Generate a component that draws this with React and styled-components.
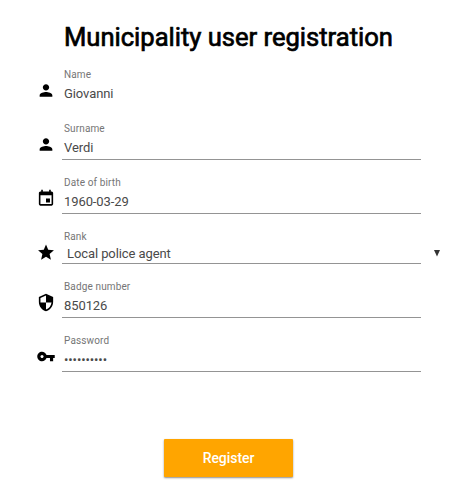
import React from 'react';
import styled, { createGlobalStyle } from 'styled-components';

const GlobalStyle = createGlobalStyle`
  * { box-sizing: border-box; }
  body { margin: 0; background: #fff; font-family: Roboto, sans-serif; }
`;

const Page = styled.main`
  display: flex;
  flex-direction: column;
  width: 463px;
  height: 504px;
  padding: 22px 0 0 36px;
  overflow: hidden;
`;

const Title = styled.h1`
  margin: 0 0 0 28px;
  height: 30px;
  font-size: 25.6px;
  line-height: 30px;
  font-weight: 400;
  color: #000;
  white-space: nowrap;
  letter-spacing: -0.02px;
  -webkit-text-stroke: 0.7px #000;
`;

const Row = styled.div`
  display: flex;
  align-items: flex-start;
  height: ${(p) => (p.$compact ? 50 : 54)}px;
`;

const IconBox = styled.svg`
  flex: none;
  width: 20px;
  height: 20px;
  margin: 29px 6px 0 0;
  fill: #000;
`;

const Field = styled.label`
  display: flex;
  flex-direction: column;
  width: 359px;
  height: 100%;
  padding: 16px 2px 0;
  border-bottom: 1px solid ${(p) => (p.$plain ? 'transparent' : '#949494')};
`;

const Caption = styled.span`
  height: 14px;
  font-size: 10px;
  line-height: 14px;
  letter-spacing: 0.13px;
  color: #757575;
`;

const Value = styled.span`
  margin-top: ${(p) => (p.$compact ? 1 : 3)}px;
  padding-left: ${(p) => (p.$compact ? 3 : 0)}px;
  font-size: 13px;
  line-height: 17px;
  letter-spacing: -0.09px;
  color: #4a4a4a;
`;

const Arrow = styled.svg`
  width: 6px;
  height: 7px;
  margin: 36px 0 0 13px;
  fill: #333;
`;

const Button = styled.button`
  width: 129px;
  height: 38px;
  margin: 67px 0 0 128px;
  padding: 0;
  border: 0;
  border-radius: 1px;
  background: #ffa500;
  box-shadow: 0 1px 2px rgba(0, 0, 0, 0.45);
  color: #fff;
  font: 500 14px/38px Roboto, sans-serif;
  letter-spacing: -0.05px;
`;

const icons = {
  person: 'M12 12c2.21 0 4-1.79 4-4s-1.79-4-4-4-4 1.79-4 4 1.79 4 4 4zm0 2c-2.67 0-8 1.34-8 4v2h16v-2c0-2.66-5.33-4-8-4z',
  event: 'M17 12h-5v5h5v-5zM16 1v2H8V1H6v2H5c-1.11 0-1.99.9-1.99 2L3 19c0 1.1.89 2 2 2h14c1.1 0 2-.9 2-2V5c0-1.1-.9-2-2-2h-1V1h-2zm3 18H5V8h14v11z',
  star: 'M12 17.27L18.18 21l-1.64-7.03L22 9.24l-7.19-.61L12 2 9.19 8.63 2 9.24l5.46 4.73L5.82 21z',
  shield: 'M12 1L3 5v6c0 5.55 3.84 10.74 9 12 5.16-1.26 9-6.45 9-12V5l-9-4zm0 10.99h7c-.53 4.12-3.28 7.79-7 8.94V12H5V6.3l7-3.11v8.8z',
  key: 'M12.65 10C11.83 7.67 9.61 6 7 6c-3.31 0-6 2.69-6 6s2.69 6 6 6c2.61 0 4.83-1.67 5.65-4H17v4h4v-4h2v-4H12.65zM7 14c-1.1 0-2-.9-2-2s.9-2 2-2 2 .9 2 2-.9 2-2 2z',
};

const fields = [
  { label: 'Name', value: 'Giovanni', icon: 'person', plain: true },
  { label: 'Surname', value: 'Verdi', icon: 'person' },
  { label: 'Date of birth', value: '1960-03-29', icon: 'event' },
  { label: 'Rank', value: 'Local police agent', icon: 'star', select: true },
  { label: 'Badge number', value: '850126', icon: 'shield' },
  { label: 'Password', value: '•'.repeat(10), icon: 'key' },
];

function FormRow({ label, value, icon, plain, select }) {
  return (
    <Row $compact={select}>
      <IconBox viewBox="-0.6 0 25.2 25.2">
        <path d={icons[icon]} />
      </IconBox>
      <Field $plain={plain}>
        <Caption>{label}</Caption>
        <Value $compact={select}>{value}</Value>
      </Field>
      {select && (
        <Arrow viewBox="0 0 6 7">
          <path d="M0 0h6L3 6.5z" />
        </Arrow>
      )}
    </Row>
  );
}

export default function App() {
  return (
    <Page>
      <GlobalStyle />
      <Title>Municipality user registration</Title>
      {fields.map((f) => <FormRow key={f.label} {...f} />)}
      <Button type="button">Register</Button>
    </Page>
  );
}
